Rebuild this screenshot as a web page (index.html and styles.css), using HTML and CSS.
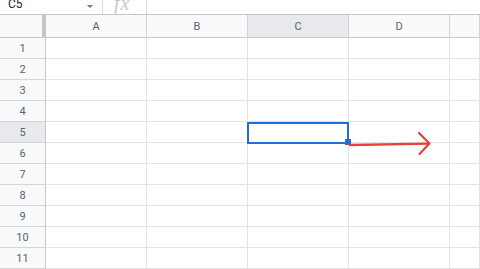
FILE: index.html
```html
<!DOCTYPE html>
<html lang="en">
<head>
    <meta charset="UTF-8">
    <title>Sheet</title>
    <link rel="stylesheet" href="styles.css">
</head>
<body>

    <div class="formula-bar">
        <div class="formula-inner">
            <div class="name-box">
                <span>C5</span>
                <span class="caret"></span>
            </div>
            <div class="fx">fx</div>
            <div class="formula-input"></div>
        </div>
    </div>

    <div class="sheet">
        <div class="grid" id="grid"></div>

        <!-- aktive Zelle C5 -->
        <div class="selection"></div>
        <div class="handle"></div>

        <svg class="arrow" width="480" height="269" viewBox="0 0 480 269">
            <path d="M350 145 C 375 144.6, 400 144.2, 429 143.6" fill="none" stroke="#e8403b" stroke-width="2.4" stroke-linecap="round"/>
            <path d="M419 133 L 429.5 143.5 L 419.5 154" fill="none" stroke="#e8403b" stroke-width="2.2" stroke-linecap="round" stroke-linejoin="round"/>
        </svg>
    </div>

    <script>
        var grid = document.getElementById("grid");
        var cols = ["A", "B", "C", "D", ""];
        var html = '<div class="corner"></div>';
        for (var c = 0; c < cols.length; c++) {
            html += '<div class="col-head' + (cols[c] === "C" ? ' active' : '') + '">' + cols[c] + '</div>';
        }
        for (var r = 1; r <= 11; r++) {
            html += '<div class="row-head' + (r === 5 ? ' active' : '') + '">' + r + '</div>';
            for (var k = 0; k < cols.length; k++) {
                html += '<div class="cell"></div>';
            }
        }
        grid.innerHTML = html;
    </script>

</body>
</html>
```

FILE: styles.css
```css
body {
    margin: 0;
    width: 480px;
    height: 269px;
    overflow: hidden;
    background-color: #fff;
    font-family: Roboto, Arial, sans-serif;
}

.formula-bar {
    height: 14px;
    border-bottom: 1px solid #c7c7c7;
    overflow: hidden;
}

.formula-inner {
    display: flex;
    height: 20px;
    margin-top: -6px;
}

.name-box {
    width: 103px;
    display: flex;
    align-items: center;
    justify-content: space-between;
    padding: 0 8px 0 8px;
    box-sizing: border-box;
    border-right: 1px solid #dadce0;
    font-size: 12px;
    color: #222;
}

.caret {
    width: 0;
    height: 0;
    border-left: 3px solid transparent;
    border-right: 3px solid transparent;
    border-top: 3px solid #777;
    margin-top: 4px;
    margin-right: 1px;
}

.fx {
    width: 44px;
    box-sizing: border-box;
    border-right: 1px solid #dadce0;
    font-family: "Liberation Serif", serif;
    font-style: italic;
    font-size: 20px;
    line-height: 19px;
    letter-spacing: 1px;
    color: #c9c9c9;
    padding-left: 11px;
}

.formula-input {
    flex: 1;
}

.sheet {
    position: relative;
}

.grid {
    display: grid;
    grid-template-columns: 46px 101px 101px 101px 101px 1fr;
    grid-template-rows: 23px;
    grid-auto-rows: 21px;
}

.corner,
.col-head,
.row-head,
.cell {
    box-sizing: border-box;
    border-right: 1px solid #e2e3e3;
    border-bottom: 1px solid #e2e3e3;
}

.corner {
    background-color: #f8f9fa;
    border-right: 4px solid #c4c7c5;
    border-bottom: 1px solid #c4c7c5;
}

.col-head,
.row-head {
    background-color: #f8f9fa;
    color: #5f6266;
    font-size: 11px;
    display: flex;
    align-items: center;
    justify-content: center;
}

.col-head {
    border-right: 1px solid #d3d5d7;
    border-bottom: 1px solid #c4c7c5;
}

.row-head {
    border-right: 1px solid #c4c7c5;
    border-bottom: 1px solid #d3d5d7;
}

.col-head.active,
.row-head.active {
    background-color: #e8eaed;
}

.selection {
    position: absolute;
    left: 247px;
    top: 107px;
    width: 102px;
    height: 22px;
    box-sizing: border-box;
    border: 2px solid #1f6fd6;
}

.handle {
    position: absolute;
    left: 345px;
    top: 124px;
    width: 6px;
    height: 6px;
    background-color: #1f6fd6;
}

.arrow {
    position: absolute;
    left: 0;
    top: -15px;
}
```
